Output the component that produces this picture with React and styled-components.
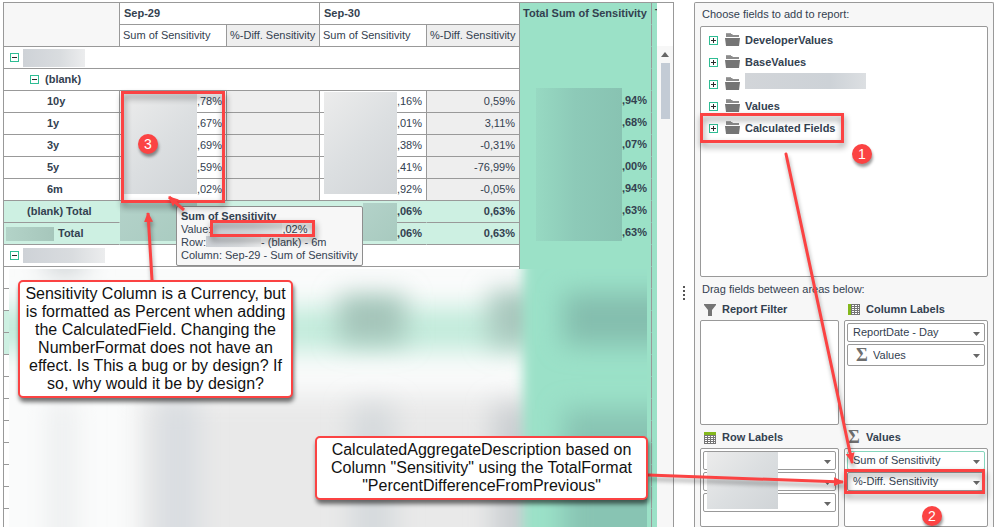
import React from 'react';
import styled, { createGlobalStyle, css } from 'styled-components';

const GlobalStyle = createGlobalStyle`
  * {
    box-sizing: border-box;
  }
  body {
    margin: 0;
    background: #fff;
    color: #334150;
    font-family: 'Liberation Sans', Arial, sans-serif;
    font-size: 11px;
    line-height: 13px;
  }
  button, select {
    font: inherit;
    color: inherit;
  }
`;

const DAYS = ['Sep-29', 'Sep-30'];

const ROWS = [
  { label: '10y', values: [',78%', '', ',16%', '0,59%'], total: ',94%' },
  { label: '1y', values: [',67%', '', ',01%', '3,11%'], total: ',68%' },
  { label: '3y', values: [',69%', '', ',38%', '-0,31%'], total: ',07%' },
  { label: '5y', values: [',59%', '', ',41%', '-76,99%'], total: ',00%' },
  { label: '6m', values: [',02%', '', ',92%', '-0,05%'], total: ',94%' },
];

const TOTAL_VALUES = ['', '', ',06%', '0,63%'];

const FIELDS = ['DeveloperValues', 'BaseValues', '', 'Values', 'Calculated Fields'];

// rows hidden under the haze, true marks a subtotal row
const HIDDEN_ROWS = [false, false, true, true, false, false, false, false, false, false, false, false];

const Toggle = ({ open, label }) => (
  <ToggleButton type='button' aria-label={label} aria-expanded={open}>
    <svg width='9' height='9' viewBox='0 0 9 9'>
      <rect x='0.5' y='0.5' width='8' height='8' fill='#fff' stroke='#2fbd94' />
      <path d={open ? 'M2 4.5h5' : 'M2 4.5h5M4.5 2v5'} stroke='#2b2b2b' />
    </svg>
  </ToggleButton>
);

const FolderIcon = () => (
  <svg width='15' height='14' viewBox='0 0 15 14'>
    <path d='M1 0h5v1h-5z' fill='#a2a2a2' />
    <path d='M1 1h6l1 1h6v2h-13z' fill='#8c8c8c' />
    <path d='M0 5h15l-1 8h-13z' fill='#757575' />
  </svg>
);

const FilterIcon = () => (
  <svg width='12' height='12' viewBox='0 0 12 12'>
    <path d='M0 0h12v1l-4 5v6h-4v-6l-4-5z' fill='#757575' />
  </svg>
);

const ColumnsIcon = () => (
  <svg width='12' height='12' viewBox='0 0 12 12'>
    <path d='M0 0h3v11h-3z' fill='#84b81c' />
    <path d='M3 0h9v11h-9z' fill='#757575' />
    <path d='M4 1.5h7M4 3.5h7M4 5.5h7M4 7.5h7M4 9.5h7' stroke='#fff' strokeDasharray='2 1' />
  </svg>
);

const RowsIcon = () => (
  <svg width='12' height='12' viewBox='0 0 12 12'>
    <path d='M0 0h12v3h-12z' fill='#84b81c' />
    <path d='M0 3h12v9h-12z' fill='#757575' />
    <path d='M1 4.5h10M1 6.5h10M1 8.5h10M1 10.5h10' stroke='#fff' strokeDasharray='2 1' />
  </svg>
);

const HazeDrawing = () => (
  <svg width='100%' height='258' viewBox='0 0 638 258' preserveAspectRatio='none'>
    <defs>
      <filter id='soft' x='-50%' y='-50%' width='200%' height='200%'>
        <feGaussianBlur stdDeviation='13' />
      </filter>
      <filter id='edge' x='-50%' y='-50%' width='200%' height='200%'>
        <feGaussianBlur stdDeviation='6' />
      </filter>
    </defs>
    <rect width='638' height='258' fill='#fafbfb' />
    <g filter='url(#soft)'>
      <rect x='-40' y='38' width='560' height='44' fill='#c2ebdb' />
      <rect x='130' y='126' width='390' height='190' fill='#e9e9e9' />
      <rect x='40' y='132' width='26' height='190' fill='#eceeef' />
      <rect x='36' y='-30' width='40' height='36' fill='#ced3d5' />
    </g>
    <g filter='url(#soft)'>
      <rect x='148' y='130' width='42' height='190' fill='#d9dde1' />
      <rect x='330' y='26' width='66' height='48' fill='#a4c4b9' />
      <rect x='480' y='22' width='60' height='54' fill='#a9c7bd' />
      <rect x='342' y='136' width='44' height='190' fill='#d6dadd' />
      <rect x='484' y='136' width='50' height='190' fill='#cbcfd2' />
    </g>
    <g filter='url(#edge)'>
      <rect x='514' y='-40' width='180' height='360' fill='#9be1c8' />
    </g>
    <g filter='url(#soft)'>
      <rect x='554' y='24' width='140' height='52' fill='#84beae' />
      <rect x='554' y='140' width='140' height='190' fill='#88c4b3' />
    </g>
  </svg>
);

const Arrows = () => (
  <ArrowLayer width='1000' height='527' viewBox='0 0 1000 527' aria-hidden='true'>
    <defs>
      <marker id='head' markerUnits='userSpaceOnUse' markerWidth='10' markerHeight='10' refX='9' refY='5' orient='auto'>
        <path d='M0 0.5L10 5L0 9.5z' fill='#fb4343' />
      </marker>
    </defs>
    <g stroke='#fb4343' strokeWidth='3'>
      <path d='M152 280L148 213' markerEnd='url(#head)' />
      <path d='M184 210L169 197' markerEnd='url(#head)' />
      <path d='M786 154L852 462' strokeLinecap='round' markerEnd='url(#head)' />
      <path d='M648 475L843 482' markerEnd='url(#head)' />
    </g>
  </ArrowLayer>
);

const FieldSelect = ({ name, sigma, active, tall }) => (
  <Pill $active={active} $tall={tall}>
    {sigma && <Sigma>Σ</Sigma>}
    <PillSelect aria-label={name || 'Field'} defaultValue={name}>
      <option value={name}>{name}</option>
    </PillSelect>
    <Caret width='7' height='4' viewBox='0 0 7 4'>
      <path d='M0 0h7l-3.5 4z' fill='#666' />
    </Caret>
  </Pill>
);

const PivotTable = () => (
  <Table>
    <colgroup>
      <Col $w={116} />
      <Col $w={107} />
      <Col $w={93} />
      <Col $w={107} />
      <Col $w={93} />
      <col />
      <Col $w={5} />
    </colgroup>
    <thead>
      <tr>
        <Corner rowSpan={2} />
        {DAYS.map((day) => <DayHead key={day} colSpan={2}>{day}</DayHead>)}
        <TotalHead>Total Sum of Sensitivity</TotalHead>
        <EdgeCell as='th'>T</EdgeCell>
      </tr>
      <tr>
        {DAYS.map((day) => (
          <React.Fragment key={day}>
            <MeasureHead>Sum of Sensitivity</MeasureHead>
            <MeasureHead $shaded>%-Diff. Sensitivity</MeasureHead>
          </React.Fragment>
        ))}
        <TotalCell />
        <EdgeCell />
      </tr>
    </thead>
    <tbody>
      <tr>
        <GroupCell colSpan={5}>
          <Group><Toggle open label='Collapse group' /><Redacted $w={62} $h={18} /></Group>
        </GroupCell>
        <TotalCell />
        <EdgeCell />
      </tr>
      <tr>
        <GroupCell colSpan={5}>
          <Group $nested><Toggle open label='Collapse (blank)' />(blank)</Group>
        </GroupCell>
        <TotalCell />
        <EdgeCell />
      </tr>
      {ROWS.map((row) => (
        <tr key={row.label}>
          <RowHead>{row.label}</RowHead>
          {row.values.map((value, i) => <ValueCell key={i} $shaded={i % 2 === 1}>{value}</ValueCell>)}
          <TotalCell>{row.total}</TotalCell>
          <EdgeCell />
        </tr>
      ))}
      <tr>
        <SubtotalHead $indent={23}>(blank) Total</SubtotalHead>
        {TOTAL_VALUES.map((value, i) => <SubtotalCell key={i}>{value}</SubtotalCell>)}
        <TotalCell>,63%</TotalCell>
        <EdgeCell />
      </tr>
      <tr>
        <SubtotalHead $indent={2}>
          <Group $flush><Redacted $w={48} $h={14} $tint />Total</Group>
        </SubtotalHead>
        {TOTAL_VALUES.map((value, i) => <SubtotalCell key={i}>{value}</SubtotalCell>)}
        <TotalCell>,63%</TotalCell>
        <EdgeCell />
      </tr>
      <tr>
        <GroupCell colSpan={5}>
          <Group><Toggle open label='Collapse group' /><Redacted $w={82} $h={15} /></Group>
        </GroupCell>
        <TotalCell />
        <EdgeCell />
      </tr>
      {HIDDEN_ROWS.map((subtotal, i) => (
        <tr key={i}>
          <GroupCell colSpan={5} $subtotal={subtotal} />
          <TotalCell />
          <EdgeCell />
        </tr>
      ))}
    </tbody>
  </Table>
);

const FieldList = () => (
  <FieldPanel>
    <PanelTitle>Choose fields to add to report:</PanelTitle>
    <Tree>
      {FIELDS.map((field, i) => (
        <TreeItem key={i}>
          <Toggle label={`Expand ${field}`} />
          <FolderIcon />
          {field || <Redacted $w={121} $h={16} $raised />}
        </TreeItem>
      ))}
    </Tree>
    <AreasTitle>Drag fields between areas below:</AreasTitle>
    <Areas>
      <Area>
        <AreaHead><FilterIcon />Report Filter</AreaHead>
        <DropZone />
      </Area>
      <Area>
        <AreaHead><ColumnsIcon />Column Labels</AreaHead>
        <DropZone>
          <FieldSelect name='ReportDate - Day' />
          <FieldSelect name='Values' sigma tall />
        </DropZone>
      </Area>
      <Area>
        <AreaHead><RowsIcon />Row Labels</AreaHead>
        <DropZone>
          <FieldSelect name='' />
          <FieldSelect name='' />
          <FieldSelect name='' />
          <Cover $x={6} $y={3} $w={71} $h={57} />
        </DropZone>
      </Area>
      <Area>
        <AreaHead><Sigma $head>Σ</Sigma>Values</AreaHead>
        <DropZone>
          <FieldSelect name='Sum of Sensitivity' active />
          <FieldSelect name='%-Diff. Sensitivity' />
        </DropZone>
      </Area>
    </Areas>
  </FieldPanel>
);

const App = () => {
  return <Page>
    <GlobalStyle />
    <GridPanel>
      <TableArea>
        <PivotTable />
        <Cover $x={120} $y={91} $w={73} $h={100} />
        <Cover $x={320} $y={89} $w={73} $h={102} />
        <Cover $x={116} $y={200} $w={77} $h={38} $tone='mint' />
        <Cover $x={359} $y={200} $w={34} $h={38} $tone='mint' />
        <Cover $x={532} $y={85} $w={86} $h={153} $tone='green' />
        <Haze><HazeDrawing /></Haze>
      </TableArea>
      <Scrollbar>
        <svg width='8' height='5' viewBox='0 0 8 5'><path d='M0 5h8l-4-5z' fill='#666' /></svg>
        <Thumb />
      </Scrollbar>
    </GridPanel>
    <Splitter><Dot /><Dot /><Dot /><Dot /></Splitter>
    <FieldList />

    <Tooltip role='tooltip'>
      <strong>Sum of Sensitivity</strong>
      <span>Value:<Redacted $w={71} $h={11} $inline />,02%</span>
      <span>Row:<Redacted $w={55} $h={11} $inline />- (blank) - 6m</span>
      <span>Column: Sep-29 - Sum of Sensitivity</span>
    </Tooltip>

    <Outline $x={121} $y={91} $w={104} $h={112} />
    <Outline $x={210} $y={220} $w={105} $h={17} />
    <Outline $x={700} $y={113} $w={144} $h={30} />
    <Outline $x={844} $y={469} $w={141} $h={25} />
    <Arrows />
    <Callout $x={18} $y={280} $w={275}>
      Sensitivity Column is a Currency, but is formatted as Percent when adding the CalculatedField. Changing the
      NumberFormat does not have an effect. Is This a bug or by design? If so, why would it be by design?
    </Callout>
    <Callout $x={315} $y={436} $w={333} $roomy>
      CalculatedAggregateDescription based on Column "Sensitivity" using the TotalFormat "PercentDifferenceFromPrevious"
    </Callout>
    <Step $x={852} $y={144}>1</Step>
    <Step $x={922} $y={506}>2</Step>
    <Step $x={138} $y={134}>3</Step>
  </Page>;
};

export default App;

const line = '#999';

const Page = styled.main`
  position: relative;
  display: flex;
  height: 100vh;
  padding: 2px 6px 0 3px;
  overflow: hidden;
`;

const GridPanel = styled.section`
  flex: 1;
  min-width: 0;
  display: flex;
  border: 1px solid ${line};
  border-bottom: none;
`;

const TableArea = styled.div`
  position: relative;
  flex: 1;
  min-width: 0;
  overflow: hidden;
`;

const Table = styled.table`
  width: 100%;
  table-layout: fixed;
  border-collapse: separate;
  border-spacing: 0;
  th, td {
    height: 22px;
    padding: 0 4px 0 3px;
    border-right: 1px solid ${line};
    border-bottom: 1px solid ${line};
    text-align: left;
    white-space: nowrap;
  }
`;

const Col = styled.col`
  width: ${(p) => p.$w}px;
`;

const Corner = styled.td`
  background: #f7f7f7;
`;

const DayHead = styled.th`
  && {
    padding-left: 4px;
  }
`;

const MeasureHead = styled.th`
  font-weight: 400;
  background: ${(p) => (p.$shaded ? '#eee' : '#fff')};
`;

const GroupCell = styled.td`
  background: ${(p) => (p.$subtotal ? '#cdf0e2' : '#fff')};
`;

const Group = styled.div`
  display: flex;
  align-items: center;
  gap: ${(p) => (p.$nested ? 6 : 4)}px;
  padding-left: ${(p) => (p.$flush ? 0 : p.$nested ? 23 : 3)}px;
  font-weight: 700;
`;

const RowHead = styled.th`
  && {
    padding-left: 43px;
  }
`;

const ValueCell = styled.td`
  && {
    text-align: right;
  }
  background: ${(p) => (p.$shaded ? '#eee' : '#fff')};
`;

const SubtotalHead = styled.th`
  background: #cdf0e2;
  && {
    padding-left: ${(p) => p.$indent}px;
    border-right-color: #cdf0e2;
  }
`;

const SubtotalCell = styled.td`
  background: #cdf0e2;
  font-weight: 700;
  && {
    text-align: right;
  }
  &&:not(:nth-child(5)) {
    border-right-color: #cdf0e2;
  }
`;

const TotalCell = styled.td`
  background: #9be1c7;
  font-weight: 700;
  && {
    padding-bottom: 2px;
    text-align: right;
    border-bottom-color: #9be1c7;
  }
`;

const TotalHead = styled.th`
  background: #9be1c7;
  && {
    border-bottom-color: #9be1c7;
  }
`;

const EdgeCell = styled.td`
  background: #9be1c7;
  overflow: hidden;
  && {
    border-right: none;
    border-bottom-color: #9be1c7;
    padding-right: 0;
  }
`;

const ToggleButton = styled.button`
  flex: none;
  display: flex;
  width: 9px;
  height: 9px;
  padding: 0;
  border: none;
  background: none;
  cursor: pointer;
`;

const Redacted = styled.span`
  flex: none;
  display: ${(p) => (p.$inline ? 'inline-block' : 'block')};
  width: ${(p) => p.$w}px;
  height: ${(p) => p.$h}px;
  vertical-align: ${(p) => (p.$inline ? 'top' : 'baseline')};
  background: ${(p) => (p.$tint
    ? 'linear-gradient(90deg, #b3d3c8, #a6c6bb)'
    : 'linear-gradient(90deg, #ced2d7, #d9dcdf 60%, #ecedee)')};
  ${(p) => p.$raised && css`
    align-self: flex-start;
    background: linear-gradient(90deg, #d2d5d9, #cdd2d7 70%, #dcdfe2);
  `}
`;

const TONES = {
  gray: 'linear-gradient(135deg, #ececec, #dcdfe1 50%, #d0d4d7)',
  mint: 'linear-gradient(135deg, #b3d2c9, #a8cabf)',
  green: 'linear-gradient(90deg, #97d9c2, #8dcab8 45%, #88c3b2)',
};

const Cover = styled.div`
  position: absolute;
  left: ${(p) => p.$x}px;
  top: ${(p) => p.$y}px;
  width: ${(p) => p.$w}px;
  height: ${(p) => p.$h}px;
  background: ${(p) => TONES[p.$tone || 'gray']};
`;

const Haze = styled.div`
  position: absolute;
  inset: 266px 10px 0 5px;
`;

const Scrollbar = styled.div`
  width: 16px;
  margin-top: 43px;
  padding-top: 6px;
  display: flex;
  flex-direction: column;
  align-items: center;
  gap: 6px;
  background: #f7f7f7;
`;

const Thumb = styled.div`
  width: 9px;
  height: 56px;
  background: #c3cbd5;
`;

const Splitter = styled.div`
  width: 20px;
  padding-top: 284px;
  display: flex;
  flex-direction: column;
  align-items: center;
  gap: 2px;
`;

const Dot = styled.span`
  width: 2px;
  height: 2px;
  background: #555;
`;

const FieldPanel = styled.section`
  width: 300px;
  flex: none;
  display: flex;
  flex-direction: column;
  padding: 0 5px;
  border: 1px solid ${line};
  border-bottom: none;
  border-radius: 2px 2px 0 0;
  background: #f7f7f7;
`;

const PanelTitle = styled.div`
  padding: 5px 2px;
`;

const AreasTitle = styled.div`
  padding: 6px 2px;
`;

const Tree = styled.ul`
  list-style: none;
  margin: 0;
  padding: 2px 8px 137px;
  border: 1px solid ${line};
  border-radius: 2px;
  background: #fff;
`;

const TreeItem = styled.li`
  display: flex;
  align-items: center;
  height: 22px;
  font-weight: 700;
  > svg {
    margin: 0 5px 0 7px;
  }
`;

const Areas = styled.div`
  flex: 1;
  display: grid;
  grid-template-columns: minmax(0, 139fr) minmax(0, 144fr);
  grid-template-rows: 123px 1fr;
  gap: 5px;
`;

const Area = styled.div`
  display: flex;
  flex-direction: column;
`;

const AreaHead = styled.div`
  display: flex;
  align-items: center;
  gap: 6px;
  height: 18px;
  padding: 0 4px 4px;
  font-weight: 700;
  svg {
    margin-top: 2px;
  }
`;

const DropZone = styled.div`
  position: relative;
  flex: 1;
  display: flex;
  flex-direction: column;
  gap: 2px;
  padding: 2px;
  border: 1px solid ${line};
  border-radius: 2px;
  background: #fff;
`;

const Pill = styled.div`
  position: relative;
  flex: none;
  display: flex;
  align-items: center;
  height: ${(p) => (p.$tall ? 22 : 19)}px;
  padding-left: 5px;
  border: 1px solid ${(p) => (p.$active ? '#86d6bc' : line)};
  border-radius: 2px;
`;

const PillSelect = styled.select`
  flex: 1;
  min-width: 0;
  height: 100%;
  padding: 0;
  border: none;
  outline: none;
  background: none;
  appearance: none;
`;

const Caret = styled.svg`
  position: absolute;
  right: 4px;
  top: calc(50% - 1px);
  pointer-events: none;
`;

const Sigma = styled.span`
  width: ${(p) => (p.$head ? 12 : 20)}px;
  padding-left: ${(p) => (p.$head ? 0 : 3)}px;
  color: #6e6e6e;
  font-family: 'Liberation Serif', serif;
  font-weight: 700;
  font-size: 18px;
  line-height: 18px;
`;

const Tooltip = styled.div`
  position: absolute;
  left: 176px;
  top: 206px;
  display: flex;
  flex-direction: column;
  padding: 3px 4px;
  border: 1px solid #8e8e8e;
  border-radius: 2px;
  background: #f7f7f7;
  white-space: nowrap;
`;

const Outline = styled.div`
  position: absolute;
  left: ${(p) => p.$x}px;
  top: ${(p) => p.$y}px;
  width: ${(p) => p.$w}px;
  height: ${(p) => p.$h}px;
  border: 3px solid #fb4343;
  filter: drop-shadow(1px 4px 3px rgba(0, 0, 0, 0.45));
  pointer-events: none;
`;

const ArrowLayer = styled.svg`
  position: absolute;
  left: 0;
  top: 0;
  fill: none;
  filter: drop-shadow(1px 4px 2px rgba(0, 0, 0, 0.35));
  pointer-events: none;
`;

const Callout = styled.p`
  position: absolute;
  left: ${(p) => p.$x}px;
  top: ${(p) => p.$y}px;
  width: ${(p) => p.$w}px;
  margin: 0;
  padding: 3px ${(p) => (p.$roomy ? 6 : 1)}px;
  border: 2px solid #fb4343;
  border-radius: 5px;
  background: #fff;
  box-shadow: 1px 4px 4px rgba(0, 0, 0, 0.55);
  color: #111;
  font-size: 16px;
  line-height: 18px;
  text-align: center;
`;

const Step = styled.span`
  position: absolute;
  left: ${(p) => p.$x}px;
  top: ${(p) => p.$y}px;
  width: 20px;
  height: 20px;
  border-radius: 50%;
  background: #fb4343;
  box-shadow: 1px 3px 3px rgba(0, 0, 0, 0.4);
  color: #fff;
  font-size: 14px;
  line-height: 20px;
  text-align: center;
`;
